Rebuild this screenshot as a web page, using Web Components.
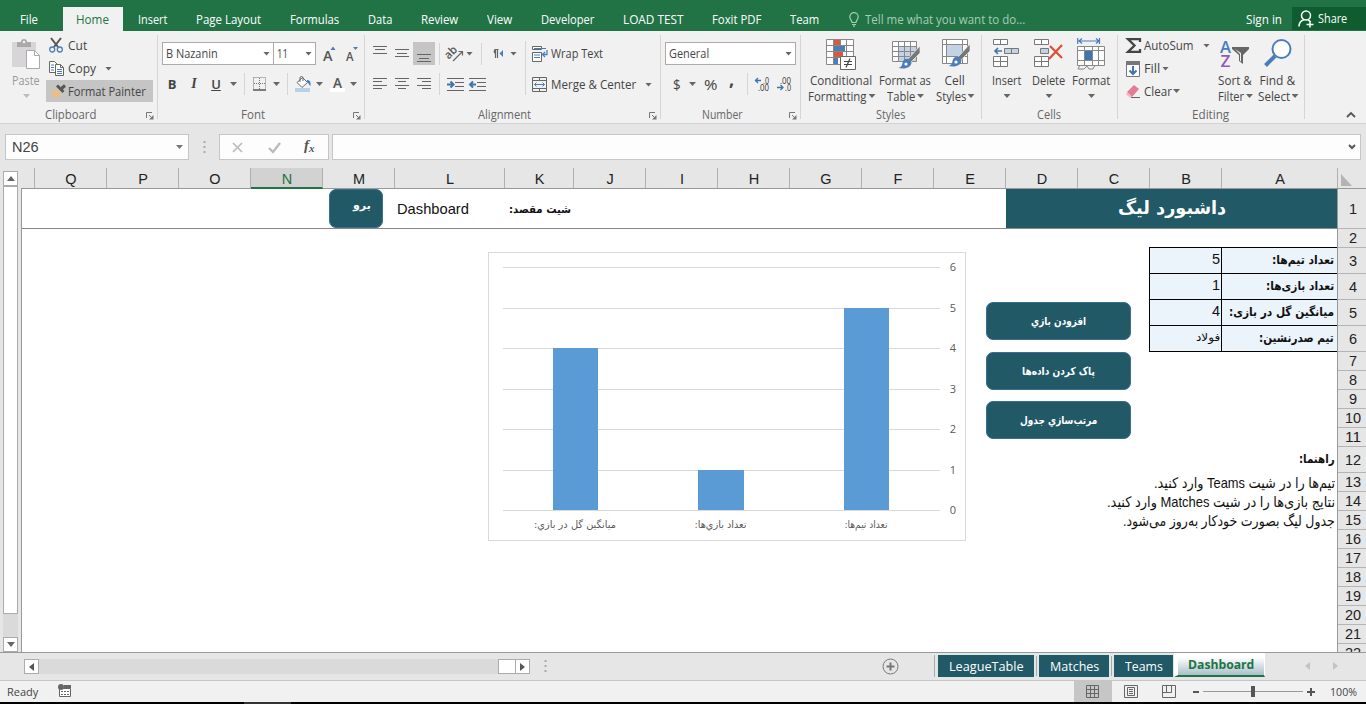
<!DOCTYPE html>
<html lang="en">
<head>
<meta charset="utf-8">
<title>Dashboard - Excel</title>
<style>
html, body {
  margin: 0;
  height: 704px;
  overflow: hidden;
  background: #e6e6e6;
}
</style>
</head>
<body>
<excel-window></excel-window>

<script>
const UI_FONT = '"Open Sans", "Noto Sans", sans-serif';
const CELL_FONT = '"Liberation Sans", "DejaVu Sans", sans-serif';

function define(name, html, setup) {
  const template = document.createElement('template');
  template.innerHTML = html;
  customElements.define(name, class extends HTMLElement {
    constructor() {
      super();
      this.attachShadow({ mode: 'open' });
      this.shadowRoot.appendChild(template.content.cloneNode(true));
    }
    connectedCallback() {
      if (setup) setup(this, this.shadowRoot);
    }
  });
}

/* ---------- icons: [width, height, markup] ---------- */
const lines = (list) => list.map(([x1, x2, y]) => `<path d="M${x1} ${y + .5}H${x2}" stroke="#666"/>`).join('');
const ICONS = {
  bulb: [10, 15, `<g fill="none" stroke="#a6cdb5" stroke-width="1.2"><path d="M3 10.5C3 8.500.8 7.500.8 4.800A4.200 4.200 0 0 1 9.200 4.800C9.200 7.500 7 8.500 7 10.500ZM3 12.500H7M4 14.200H6"/></g>`],
  person: [16, 18, `<g fill="none" stroke="#fff" stroke-width="1.500"><circle cx="8" cy="5.500" r="4.500"/><path d="M1 16.500C1.200 12.500 3 10.500 6 9.800M10 10C11 10.400 12 11 12.500 12M12 11v6.500M8.500 14.500h7"/></g>`],
  paste: [28, 31, `<path d="M0 3h24v25H0z" fill="#d8d5d8"/><path d="M5 3h4a3 3 0 0 1 6 0h4v5H5z" fill="#aaa"/><circle cx="12" cy="3" r="1.300" fill="#f1f1f1"/><path d="M14.500 11.500h8l5 5v13h-13z" fill="#fff" stroke="#aaa"/><path d="M22.500 11.500v5h5" fill="none" stroke="#aaa"/>`],
  cut: [14, 15, `<path d="M2 0l7 9M12 0L5 9" stroke="#555" stroke-width="2"/><circle cx="3.200" cy="11.500" r="2.500" fill="none" stroke="#4a7ebb" stroke-width="1.300"/><circle cx="10.800" cy="11.500" r="2.500" fill="none" stroke="#4a7ebb" stroke-width="1.300"/>`],
  copy: [15, 15, `<g fill="#fff" stroke="#666"><path d="M.5.500h5l3 3v8h-8z"/><path d="M6.500 3.500h5l3 3v8h-8z"/><path d="M11.500 3.500v3h3" fill="none"/></g><path d="M2 4h3M2 6.500h3M2 9h3M8 8.500h5M8 10.500h5M8 12.500h5" stroke="#4a7ebb"/>`],
  painter: [14, 14, `<path d="M0 6l4-1 5 5-2 3-4 1-3-4z" fill="#e8bf84"/><path d="M4 2.500L10.500 9 12.500 7 6 .5z" fill="#555"/><path d="M9.500 4.500L13 1.500" stroke="#555" stroke-width="3"/>`],
  launcher: [8, 8, `<path d="M.500 6V.500H6M3 3l3 3" fill="none" stroke="#777"/><path d="M7.500 3v4.500H3z" fill="#777"/>`],
  growfont: [14, 15, `<text x="0" y="14.500" font-size="15" font-weight="600" textLength="9.500" lengthAdjust="spacingAndGlyphs" fill="#555">A</text><path d="M7.500 4l2.500-3.500L12.500 4z" fill="#4a7ebb"/>`],
  shrinkfont: [14, 15, `<text x="0" y="14.500" font-size="12" font-weight="600" textLength="7.500" lengthAdjust="spacingAndGlyphs" fill="#555">A</text><path d="M7 1l2.500 3L12 1z" fill="#4a7ebb"/>`],
  borders: [14, 14, `<path d="M.500.500h12v12M.500.500v12M6.500 1v12M1 6.500h12" fill="none" stroke="#777" stroke-dasharray="1 1"/><path d="M0 13h13" stroke="#555" stroke-width="1.500"/>`],
  fillcolor: [17, 16, `<path d="M0 12h15v4H0z" fill="#b9d0ea"/><path d="M7.500 1.500l5 5-5.500 5-5-5z" fill="#fff" stroke="#666"/><path d="M5 6V2a1.500 1.500 0 0 1 3 0v3" fill="none" stroke="#666"/><path d="M12 4c3 0 4 2 3.500 6-1.500-.5-1.500-3-3.500-4z" fill="#4a7ebb"/>`],
  fontcolor: [15, 16, `<path d="M0 12h15v4H0z" fill="#fff"/><text x="3" y="11.500" font-size="14" font-weight="600" textLength="9" lengthAdjust="spacingAndGlyphs" fill="#555">A</text>`],
  top: [14, 24, lines([[0, 14, 4], [2, 12, 7], [0, 14, 11]])],
  middle: [14, 24, lines([[0, 14, 7], [2, 12, 11], [0, 14, 14]])],
  bottom: [14, 24, lines([[0, 14, 12], [2, 12, 16], [0, 14, 19]])],
  left: [14, 12, lines([[0, 14, 0], [0, 9, 3], [0, 14, 7], [0, 9, 10]])],
  center: [14, 12, lines([[0, 14, 0], [3, 11, 3], [0, 14, 7], [3, 11, 10]])],
  right: [14, 12, lines([[0, 14, 0], [5, 14, 3], [0, 14, 7], [5, 14, 10]])],
  orient: [17, 16, `<g transform="rotate(-45 6 8)"><text x="-1" y="9" font-size="11.500" font-weight="600" textLength="13" lengthAdjust="spacingAndGlyphs" fill="#555">ab</text></g><path d="M6 15L15 6M11.500 5.500H15.500V9.500" fill="none" stroke="#666" stroke-width="1.200"/>`],
  rtl: [13, 10, `<path d="M3.500.500H7.500M4.500 0V9M6.500 0V9" stroke="#666" stroke-width="1.200"/><path d="M4.500 0a2.600 2.600 0 0 0 0 5z" fill="#666"/><path d="M12 1v7L8.500 4.500z" fill="#4a7ebb"/>`],
  indent: [17, 13, lines([[0, 17, 0], [8, 17, 4], [8, 17, 8], [0, 17, 12]]) + `<path d="M0 6.500h6M3.500 3.500l3 3-3 3" fill="none" stroke="#3f74ae" stroke-width="2"/>`],
  outdent: [17, 13, lines([[0, 17, 0], [8, 17, 4], [8, 17, 8], [0, 17, 12]]) + `<path d="M1 6.500h6M4 3.500l-3 3 3 3" fill="none" stroke="#3f74ae" stroke-width="2"/>`],
  wrap: [16, 16, `<g fill="#fff" stroke="#666"><path d="M.500.500h9v3h-9zM.500 6.500h9v9h-9z"/></g><path d="M2 2.500h12M2 9h6M2 11.500h6" stroke="#4a7ebb"/><path d="M15 4v4.500H11M13 6l-2.500 2.500L13 11" fill="none" stroke="#4a7ebb" stroke-width="1.300"/>`],
  merge: [15, 15, `<path d="M.500.500h14v14H.500zM.500 3.500h14M.500 11.500h14M7.500.500v3M7.500 11.500v3" fill="none" stroke="#666"/><path d="M2.500 7.500h10M4.500 5.500l-2 2 2 2M10.500 5.500l2 2-2 2" fill="none" stroke="#4a7ebb"/>`],
  incdec: [15, 14, `<path d="M0 3.500h6M3 1L.500 3.500 3 6" fill="none" stroke="#3f74ae" stroke-width="1.300"/><text x="8" y="7" font-size="8.500" fill="#333" textLength="6" lengthAdjust="spacingAndGlyphs">.0</text><text x="3" y="14" font-size="8.500" fill="#333" textLength="11" lengthAdjust="spacingAndGlyphs">.00</text>`],
  decdec: [15, 14, `<path d="M0 10.500h6M3.500 8L6 10.500 3.500 13" fill="none" stroke="#3f74ae" stroke-width="1.300"/><text x="3" y="7" font-size="8.500" fill="#333" textLength="11" lengthAdjust="spacingAndGlyphs">.00</text><text x="8" y="14" font-size="8.500" fill="#333" textLength="6" lengthAdjust="spacingAndGlyphs">.0</text>`],
  conditional: [31, 31, `<path d="M.500.500h27v25H.500z" fill="#fff"/><path d="M8 1h6v6H8zM8 13h9v6H8z" fill="#d65a3c"/><path d="M8 7h11v6H8zM8 19h4v6H8z" fill="#4a7ebb"/><path d="M.500.500h27v25H.500zM.500 6.500h27M.500 12.500h27M.500 18.500h27M7.500.500v25M14.500.500v6M20.500.500v25" fill="none" stroke="#888"/><path d="M14.500 17.500h15v13h-15z" fill="#fff" stroke="#666"/><path d="M18 22.500h8M18 25.500h8M24 19.500l-4 9" stroke="#444" fill="none" stroke-width="1.200"/>`],
  formattable: [29, 31, `<path d="M.500 2.500h24v20H.500z" fill="#fff"/><path d="M6 8h19v15H6z" fill="#c3d3e6"/><path d="M.500 2.500h24v20H.500zM.500 7.500h24M.500 12.500h24M.500 17.500h24M6.500 2.500v20M12.500 2.500v20M18.500 2.500v20" fill="none" stroke="#888"/><path d="M28 7L16 20l3 3L28 14z" fill="#777" stroke="#f1f1f1" stroke-width=".7"/><path d="M17 20c-4-1-6 1-6.500 4-.5 3-1.500 4-4 5 7 1.500 13-.5 13-6z" fill="#4a7ebb"/><circle cx="14" cy="25" r="1.600" fill="#fff"/>`],
  cellstyles: [29, 31, `<path d="M.500.500h25v24H.500z" fill="#fff"/><path d="M5 6h15v11H5z" fill="#c3d3e6"/><path d="M.500.500h25v24H.500zM.500 5.500h25M.500 17.500h25M4.500.500v24M20.500.500v24" fill="none" stroke="#888"/><path d="M28 5L16 18l3 3L28 12z" fill="#777" stroke="#f1f1f1" stroke-width=".7"/><path d="M17 18c-4-1-6 1-6.500 4-.5 3-1.500 4-4 5 7 1.500 13-.5 13-6z" fill="#4a7ebb"/><circle cx="14" cy="23" r="1.600" fill="#fff"/>`],
  insert: [27, 30, `<g fill="#fff" stroke="#777"><path d="M.500.500h14v5H.500zM7.500.500v5M.500 17.500h14v10H.500zM7.500 17.500v10M.500 22.500h14"/><path d="M11.500 9.500h14v5h-14zM18.500 9.500v5" fill="#c3d3e6"/></g><path d="M2 12h7M5 9l-3 3 3 3" stroke="#3f74ae" stroke-width="1.600" fill="none"/>`],
  delete: [30, 30, `<g fill="#fff" stroke="#777"><path d="M.500.500h14v5H.500zM7.500.500v5M.500 17.500h14v10H.500zM7.500 17.500v10M.500 22.500h14"/><path d="M6.500 9.500h8v5h-8z" fill="#c3d3e6"/></g><path d="M16 7l12 12M28 6L15 20" stroke="#dc5036" stroke-width="2.200"/>`],
  format: [29, 31, `<g transform="translate(0 -1)"><path d="M.700 0v6M22.500 0v6M2 3h20M5 .5L2 3l3 2.500M19 .5L22 3l-3 2.500" stroke="#4a7ebb" fill="none" stroke-width="1.200"/><path d="M.500 8.500h27v19H.500z" fill="#fff"/><path d="M8 13h8v10H8z" fill="#3f74ae"/><path d="M.500 8.500h27v19H.500zM.500 12.500h27M.500 22.500h27M7.500 8.500v19M15.500 8.500v19M21.500 8.500v19M3 27l-2 4h6l3-3 2 3h4l2-4" fill="none" stroke="#888"/></g>`],
  sigma: [15, 15, `<path d="M14 4V1.200H2L8.500 7.500 2 13.800H14V11" fill="none" stroke="#444" stroke-width="2.300"/>`],
  fill: [14, 16, `<path d="M.500.500h13v15H.500z" fill="#fff" stroke="#777"/><path d="M0 0h14v4H0z" fill="#777"/><path d="M7 5v8M3.500 9.500L7 13l3.500-3.500" fill="none" stroke="#3f74ae" stroke-width="2"/>`],
  clear: [14, 14, `<path d="M1 8L8 1l5 4-7 8z" fill="#e77a94"/><path d="M1 8l5 5-2 .500-4-3z" fill="#f3b6c3"/><path d="M5 13.500h9" stroke="#666"/>`],
  sort: [30, 30, `<g font-weight="600"><text x="0" y="13.500" font-size="16.500" fill="#4a7ebb" textLength="11" lengthAdjust="spacingAndGlyphs">A</text><text x="0.500" y="27.500" font-size="16.500" fill="#9459b8" textLength="10" lengthAdjust="spacingAndGlyphs">Z</text></g><path d="M12 8h17v2l-6 6v9l-4-3v-6l-7-6z" fill="#666"/><path d="M15 10l5 5v7l1 .500V14z" fill="#f1f1f1"/>`],
  find: [28, 30, `<circle cx="17.500" cy="10" r="9" fill="#fff" stroke="#4a7ebb" stroke-width="2"/><path d="M11 17L1.500 26.500" stroke="#4a7ebb" stroke-width="4"/>`],
  collapse: [10, 7, `<path d="M1 6l4-4 4 4" fill="none" stroke="#555" stroke-width="1.800"/>`],
  expand: [8, 6, `<path d="M1 1l3 3 3-3" fill="none" stroke="#555" stroke-width="2"/>`],
  cancel: [11, 11, `<path d="M1 1l9 9M10 1l-9 9" stroke="#bbb" stroke-width="1.700"/>`],
  accept: [13, 11, `<path d="M1 6l4 4 7-9" fill="none" stroke="#bbb" stroke-width="2.400"/>`],
  dots: [3, 12, `<path d="M.500 0h2v2h-2zM.500 5h2v2h-2zM.500 10h2v2h-2z" fill="#aaa"/>`],
  corner: [11, 12, `<path d="M0 0v12h11z" fill="#b4b4b4"/>`],
  up: [8, 5, `<path d="M0 5l4-5 4 5z" fill="#666"/>`],
  down: [8, 5, `<path d="M0 0l4 5 4-5z" fill="#666"/>`],
  prev: [5, 8, `<path d="M5 0L0 4l5 4z" fill="currentColor"/>`],
  next: [5, 8, `<path d="M0 0l5 4-5 4z" fill="currentColor"/>`],
  newsheet: [17, 17, `<circle cx="8.500" cy="8.500" r="7.500" fill="none" stroke="#777"/><path d="M4.500 8.500h8M8.500 4.500v8" stroke="#777" stroke-width="2"/>`],
  macro: [14, 14, `<path d="M1.500 4.500h11v8h-11z" fill="#fff" stroke="#666"/><path d="M6 1h7v3H6z" fill="#666"/><circle cx="3" cy="3" r="3" fill="#666"/><path d="M3 7.500h8M3 10.500h8" stroke="#666" stroke-dasharray="2 1"/>`],
  normal: [14, 13, `<path d="M.500.500h12v12H.500zM.500 4.500h12M.500 8.500h12M4.500.500v12M8.500.500v12" fill="none" stroke="#666"/>`],
  page: [14, 13, `<path d="M.500.500h13v12H.500z" fill="none" stroke="#666"/><path d="M3.500 2.500h7v8h-7zM5 4.500h4M5 6.500h4M5 8.500h4" fill="none" stroke="#666"/>`],
  pagebreak: [14, 13, `<path d="M.500.500h13v12H.500zM4.500.500v7M9.500.500v7M.500 7.500h9" fill="none" stroke="#666"/>`],
};

define('ui-icon', `
<style>
:host { display: block; flex: none; }
svg { display: block; overflow: visible; font-family: ${UI_FONT}; }
</style>
<div id="box"></div>
`, (el, root) => {
  const [w, h, body] = ICONS[el.getAttribute('name')];
  root.querySelector('#box').innerHTML = `<svg width="${w}" height="${h}" viewBox="0 0 ${w} ${h}">${body}</svg>`;
});

/* one line of text, condensed or stretched to the width in its "w" attribute */
define('ui-label', `
<style>
:host { display: block; flex: none; white-space: nowrap; }
span { display: inline-block; transform-origin: 0 50%; }
</style>
<span><slot></slot></span>
`, (el, root) => {
  const w = Number(el.getAttribute('w'));
  if (!w) return;
  const span = root.querySelector('span');
  el.style.direction = 'ltr';
  span.style.direction = el.hasAttribute('rtl') ? 'rtl' : 'ltr';
  el.style.width = w + 'px';
  span.style.transform = `scaleX(${w / span.offsetWidth})`;
});

define('drop-arrow', `
<style>
:host { display: block; flex: none; width: 7px; height: 4px; margin-right: -2px; background: var(--arrow, #666); clip-path: polygon(0 0, 100% 0, 50% 100%); }
</style>
`);

define('tool-sep', `
<style>
:host { display: block; flex: none; width: 1px; height: 22px; background: #d5d5d5; }
</style>
`);

/* ---------- title tabs ---------- */
define('ribbon-tabs', `
<style>
:host { display: flex; height: 31px; background: #217346; color: #fff; font: 12px ${UI_FONT}; }
div { display: flex; align-items: center; box-sizing: border-box; height: 24px; margin-top: 7px; }
.home { width: 60px; padding-left: 13px; margin-left: 25px; background: #f1f1f1; color: #217346; }
.tell { color: #a6cdb5; gap: 6px; margin-left: 30px; }
.share { height: 23px; width: 74px; margin-left: 10px; padding-left: 6px; gap: 4px; background: #0f5c30; }
</style>
<div style="margin-left:20px"><ui-label w="18">File</ui-label></div>
<div class="home"><ui-label w="33">Home</ui-label></div>
<div style="margin-left:15px"><ui-label w="29">Insert</ui-label></div>
<div style="margin-left:29px"><ui-label w="65">Page Layout</ui-label></div>
<div style="margin-left:29px"><ui-label w="49">Formulas</ui-label></div>
<div style="margin-left:29px"><ui-label w="24">Data</ui-label></div>
<div style="margin-left:29px"><ui-label w="37">Review</ui-label></div>
<div style="margin-left:29px"><ui-label w="25">View</ui-label></div>
<div style="margin-left:29px"><ui-label w="53">Developer</ui-label></div>
<div style="margin-left:29px"><ui-label w="60">LOAD TEST</ui-label></div>
<div style="margin-left:29px"><ui-label w="49">Foxit PDF</ui-label></div>
<div style="margin-left:29px"><ui-label w="29">Team</ui-label></div>
<div class="tell"><ui-icon name="bulb"></ui-icon><ui-label w="160">Tell me what you want to do...</ui-label></div>
<div style="margin-left:auto"><ui-label w="36">Sign in</ui-label></div>
<div class="share"><ui-icon name="person"></ui-icon><ui-label w="29">Share</ui-label></div>
`);

/* ---------- ribbon ---------- */
define('ribbon-group', `
<style>
:host { display: flex; flex: none; flex-direction: column; box-sizing: border-box; height: 92px; position: relative; }
.body { height: 75px; display: flex; }
.foot { height: 18px; display: flex; align-items: center; justify-content: center; padding-right: 2px; color: #666; }
:host([launcher]) .foot { padding-right: 17px; }
.line { position: absolute; right: 0; top: 4px; width: 1px; height: 84px; background: #d5d5d5; }
#launch { position: absolute; right: 4px; top: 81px; }
</style>
<div class="body"><slot></slot></div>
<div class="foot" id="foot"></div>
<div class="line"></div>
<div id="launch"></div>
`, (el, root) => {
  root.querySelector('#foot').innerHTML = `<ui-label w="${el.getAttribute('label-width')}">${el.getAttribute('name')}</ui-label>`;
  el.style.width = el.getAttribute('width') + 'px';
  if (el.hasAttribute('launcher')) root.querySelector('#launch').innerHTML = '<ui-icon name="launcher"></ui-icon>';
});

/* large button: icon on top, one or two caption lines */
define('big-button', `
<style>
:host { display: flex; flex: none; flex-direction: column; align-items: center; padding-top: 8px; }
.pic { height: 33px; }
.line { display: flex; align-items: center; gap: 2px; height: 16px; }
.line.last { padding-right: 1px; }
</style>
<div class="pic"><slot name="icon"></slot></div>
<div class="line"><slot></slot></div>
<div class="line last"><slot name="second"></slot><drop-arrow></drop-arrow></div>
`);

define('combo-box', `
<style>
:host { display: flex; flex: none; align-items: center; justify-content: space-between; box-sizing: border-box; height: 23px; padding: 0 5px 0 3px; background: #fff; border: 1px solid #ababab; }
</style>
<slot></slot><drop-arrow></drop-arrow>
`);

define('excel-ribbon', `
<style>
:host { display: flex; height: 92px; background: #f1f1f1; border-bottom: 1px solid #d2d2d2; color: #444; font: 12px ${UI_FONT}; }
.col { display: flex; flex-direction: column; }
.row { display: flex; align-items: center; flex: none; }
.painter { width: 107px; height: 22px; background: #c5c5c5; }
.on { background: #c5c5c5; height: 23px; display: flex; align-items: center; padding: 0 4px; }
.glyph { width: 10px; text-align: center; font-size: 14px; line-height: 16px; font-weight: 600; color: #444; }
.disabled { color: #999; --arrow: #bbb; }
</style>

<ribbon-group name="Clipboard" width="158" label-width="51" launcher>
  <big-button class="disabled" style="margin-left:11px; width:30px">
    <ui-icon slot="icon" name="paste"></ui-icon><ui-label w="28">Paste</ui-label>
  </big-button>
  <div class="col" style="margin-left:5px; padding-top:3px">
    <div class="row" style="height:23px; padding-left:3px"><ui-icon name="cut"></ui-icon><ui-label w="19" style="margin-left:5px">Cut</ui-label></div>
    <div class="row" style="height:23px; padding-left:3px"><ui-icon name="copy"></ui-icon><ui-label w="28" style="margin-left:4px">Copy</ui-label><drop-arrow style="margin-left:9px"></drop-arrow></div>
    <div class="row painter"><ui-icon name="painter" style="margin-left:6px"></ui-icon><ui-label w="78" style="margin-left:2px">Format Painter</ui-label></div>
  </div>
</ribbon-group>

<ribbon-group name="Font" width="207" label-width="24" launcher>
  <div class="col" style="padding-left:4px">
    <div class="row" style="height:23px; margin-top:11px">
      <combo-box style="width:112px"><ui-label w="52">B Nazanin</ui-label></combo-box>
      <combo-box style="width:43px; margin-left:-1px"><ui-label w="11">11</ui-label></combo-box>
      <ui-icon name="growfont" style="margin-left:7px"></ui-icon>
      <ui-icon name="shrinkfont" style="margin-left:9px"></ui-icon>
    </div>
    <div class="row" style="height:22px; margin-top:8px">
      <div class="glyph" style="margin-left:5px; font-size:13px; font-weight:bold">B</div>
      <div class="glyph" style="margin-left:12px; font:italic bold 14px 'Liberation Serif', serif">I</div>
      <div class="glyph" style="margin-left:12px; font-size:13px; text-decoration:underline">U</div>
      <drop-arrow style="margin-left:9px"></drop-arrow>
      <tool-sep style="margin-left:9px"></tool-sep>
      <ui-icon name="borders" style="margin-left:8px"></ui-icon>
      <drop-arrow style="margin-left:6px"></drop-arrow>
      <tool-sep style="margin-left:9px"></tool-sep>
      <ui-icon name="fillcolor" style="margin-left:7px"></ui-icon>
      <drop-arrow style="margin-left:4px"></drop-arrow>
      <ui-icon name="fontcolor" style="margin-left:9px"></ui-icon>
      <drop-arrow style="margin-left:5px"></drop-arrow>
    </div>
  </div>
</ribbon-group>

<ribbon-group name="Alignment" width="296" label-width="53" launcher>
  <div class="col">
    <div class="row" style="height:23px; margin-top:11px; padding-left:8px">
      <ui-icon name="top"></ui-icon>
      <ui-icon name="middle" style="margin-left:8px"></ui-icon>
      <div class="on" style="margin-left:4px"><ui-icon name="bottom"></ui-icon></div>
      <tool-sep style="margin-left:4px"></tool-sep>
      <ui-icon name="orient" style="margin-left:7px"></ui-icon>
      <drop-arrow style="margin-left:2px"></drop-arrow>
      <tool-sep style="margin-left:10px"></tool-sep>
      <ui-icon name="rtl" style="margin-left:9px"></ui-icon>
      <drop-arrow style="margin-left:6px"></drop-arrow>
    </div>
    <div class="row" style="height:22px; margin-top:8px; padding-left:8px">
      <ui-icon name="left"></ui-icon>
      <ui-icon name="center" style="margin-left:8px"></ui-icon>
      <ui-icon name="right" style="margin-left:8px"></ui-icon>
      <tool-sep style="margin-left:8px"></tool-sep>
      <ui-icon name="indent" style="margin-left:7px"></ui-icon>
      <ui-icon name="outdent" style="margin-left:5px"></ui-icon>
    </div>
  </div>
  <tool-sep style="margin:10px 0 0 10px; height:54px"></tool-sep>
  <div class="col" style="margin-left:6px">
    <div class="row" style="height:23px; margin-top:11px"><ui-icon name="wrap"></ui-icon><ui-label w="52" style="margin-left:3px">Wrap Text</ui-label></div>
    <div class="row" style="height:23px; margin-top:8px"><ui-icon name="merge"></ui-icon><ui-label w="85" style="margin-left:4px">Merge &amp; Center</ui-label><drop-arrow style="margin-left:9px"></drop-arrow></div>
  </div>
</ribbon-group>

<ribbon-group name="Number" width="140" label-width="41" launcher>
  <div class="col" style="padding-left:4px">
    <div class="row" style="height:23px; margin-top:11px"><combo-box style="width:131px"><ui-label w="40">General</ui-label></combo-box></div>
    <div class="row" style="height:22px; margin-top:8px">
      <ui-label w="8" style="margin-left:8px; font-size:15px">$</ui-label>
      <drop-arrow style="margin-left:8px"></drop-arrow>
      <ui-label w="13" style="margin-left:10px; font-size:15px">%</ui-label>
      <ui-label w="5" style="margin:-11px 0 0 12px; font-size:18px; font-weight:bold">,</ui-label>
      <tool-sep style="margin-left:13px"></tool-sep>
      <ui-icon name="incdec" style="margin-left:7px"></ui-icon>
      <ui-icon name="decdec" style="margin-left:7px"></ui-icon>
    </div>
  </div>
</ribbon-group>

<ribbon-group name="Styles" width="181" label-width="29">
  <big-button style="margin-left:6px; width:68px"><ui-icon slot="icon" name="conditional"></ui-icon><ui-label w="62">Conditional</ui-label><ui-label slot="second" w="59">Formatting</ui-label></big-button>
  <big-button style="margin-left:4px; width:52px"><ui-icon slot="icon" name="formattable" style="margin-left:2px"></ui-icon><ui-label w="52">Format as</ui-label><ui-label slot="second" w="28">Table</ui-label></big-button>
  <big-button style="margin-left:4px; width:39px"><ui-icon slot="icon" name="cellstyles" style="margin-left:3px"></ui-icon><ui-label w="20">Cell</ui-label><ui-label slot="second" w="30">Styles</ui-label></big-button>
</ribbon-group>

<ribbon-group name="Cells" width="136" label-width="24">
  <big-button style="margin-left:9px; width:31px"><ui-icon slot="icon" name="insert"></ui-icon><ui-label w="29">Insert</ui-label></big-button>
  <big-button style="margin-left:9px; width:35px"><ui-icon slot="icon" name="delete"></ui-icon><ui-label w="33">Delete</ui-label></big-button>
  <big-button style="margin-left:6px; width:38px"><ui-icon slot="icon" name="format"></ui-icon><ui-label w="38">Format</ui-label></big-button>
</ribbon-group>

<ribbon-group name="Editing" width="187" label-width="37">
  <div class="col" style="margin-left:8px; padding-top:3px">
    <div class="row" style="height:23px"><ui-icon name="sigma"></ui-icon><ui-label w="50" style="margin-left:3px">AutoSum</ui-label><drop-arrow style="margin-left:9px"></drop-arrow></div>
    <div class="row" style="height:23px"><ui-icon name="fill"></ui-icon><ui-label w="16" style="margin-left:4px">Fill</ui-label><drop-arrow style="margin-left:2px"></drop-arrow></div>
    <div class="row" style="height:22px"><ui-icon name="clear"></ui-icon><ui-label w="28" style="margin-left:4px">Clear</ui-label><drop-arrow style="margin-left:1px"></drop-arrow></div>
  </div>
  <big-button style="margin-left:10px; width:34px"><ui-icon slot="icon" name="sort"></ui-icon><ui-label w="34">Sort &amp;</ui-label><ui-label slot="second" w="26">Filter</ui-label></big-button>
  <big-button style="margin-left:6px; width:39px"><ui-icon slot="icon" name="find"></ui-icon><ui-label w="36">Find &amp;</ui-label><ui-label slot="second" w="32">Select</ui-label></big-button>
</ribbon-group>

<ui-icon name="collapse" style="margin:80px 10px 0 auto"></ui-icon>
`);

/* ---------- formula bar ---------- */
define('formula-bar', `
<style>
:host { display: flex; align-items: center; height: 26px; padding: 10px 5px 0; color: #444; --arrow: #777; }
div { box-sizing: border-box; height: 26px; display: flex; align-items: center; background: #fdfdfd; border: 1px solid #c6c6c6; }
.name { width: 184px; padding: 0 7px 0 6px; justify-content: space-between; font: 14px ${CELL_FONT}; }
.buttons { width: 110px; margin-left: 13px; padding-left: 12px; }
.fx { font: italic bold 15px "Liberation Serif", serif; margin: -3px 0 0 23px; color: #555; }
.fx sub { font-size: 11px; vertical-align: -2px; }
.input { flex: 1; margin-left: 3px; justify-content: flex-end; padding-right: 4px; }
</style>
<div class="name"><ui-label w="27">N26</ui-label><drop-arrow></drop-arrow></div>
<ui-icon name="dots" style="margin-left:14px"></ui-icon>
<div class="buttons"><ui-icon name="cancel"></ui-icon><ui-icon name="accept" style="margin-left:25px"></ui-icon><span class="fx">f<sub>x</sub></span></div>
<div class="input"><ui-icon name="expand"></ui-icon></div>
`);

/* ---------- sheet ---------- */
const COLUMNS = [['A', 116], ['B', 72], ['C', 72], ['D', 72], ['E', 72], ['F', 72], ['G', 72], ['H', 72], ['I', 72], ['J', 72],
  ['K', 69], ['L', 110], ['M', 72], ['N', 72], ['O', 72], ['P', 72], ['Q', 72], ['', 13]];
const ROWS = [40, 19, 26, 26, 26, 26, 19, 19, 19, 19, 19, 26, 19, 19, 19, 19, 19, 19, 19, 19, 19, 19];

define('column-headers', `
<style>
:host { display: flex; direction: rtl; height: 20px; padding-left: 22px; border-bottom: 1px solid #999; font: 14.500px ${CELL_FONT}; color: #222; }
#list { display: flex; }
#list div { box-sizing: border-box; height: 20px; line-height: 22px; text-align: center; padding-left: 1px; border-right: 1px solid #b0b0b0; }
#list .active { background: #d2d2d2; color: #217346; height: 21px; border-bottom: 2px solid #217346; }
.all { width: 28px; padding-top: 6px; direction: ltr; box-sizing: border-box; }
</style>
<div class="all"><ui-icon name="corner" style="margin-left:3px"></ui-icon></div>
<div id="list"></div>
`, (el, root) => {
  root.querySelector('#list').innerHTML = COLUMNS.map(([name, w]) =>
    `<div style="width:${w}px"${name === 'N' ? ' class="active"' : ''}>${name}</div>`).join('');
});

define('row-headers', `
<style>
:host { display: block; width: 29px; height: 463px; overflow: hidden; box-sizing: border-box; border-left: 1px solid #999; font: 14.500px ${CELL_FONT}; color: #222; }
#list div { box-sizing: border-box; display: flex; align-items: center; justify-content: center; border-bottom: 1px solid #b5b5b5; padding-left: 2px; }
</style>
<div id="list"></div>
`, (el, root) => {
  root.querySelector('#list').innerHTML = ROWS.map((h, i) => `<div style="height:${h}px"><ui-label w="${i < 9 ? 8 : 16}">${i + 1}</ui-label></div>`).join('');
});

define('scroll-bar', `
<style>
:host { display: flex; background: #dadada; }
:host([vertical]) { flex-direction: column; }
div { box-sizing: border-box; flex: none; width: 15px; height: 15px; display: flex; align-items: center; justify-content: center; background: #fff; border: 1px solid #ababab; color: #555; }
</style>
<div id="start"></div>
<div id="thumb"></div>
<div id="end"></div>
`, (el, root) => {
  const vertical = el.hasAttribute('vertical');
  const start = root.querySelector('#start');
  const thumb = root.querySelector('#thumb');
  const end = root.querySelector('#end');
  start.innerHTML = `<ui-icon name="${vertical ? 'up' : 'prev'}"></ui-icon>`;
  end.innerHTML = `<ui-icon name="${vertical ? 'down' : 'next'}"></ui-icon>`;
  if (vertical) {
    thumb.style.height = el.getAttribute('thumb') + 'px';
    end.style.marginTop = 'auto';
  } else {
    thumb.style.width = el.getAttribute('thumb') + 'px';
    thumb.style.marginLeft = 'auto';
    end.style.marginLeft = '-1px';
  }
});

define('macro-button', `
<style>
:host { position: absolute; box-sizing: border-box; display: flex; justify-content: center; align-items: center; width: 145px; height: 38px; background: #215967; border: 1px solid #3a6f92; border-radius: 7px; color: #fff; font: bold 11px "DejaVu Sans", sans-serif; }
</style>
<slot></slot>
`);

define('bar-chart', `
<style>
:host { position: absolute; display: block; box-sizing: border-box; width: 478px; height: 289px; background: #fff; border: 1px solid #d9d9d9; }
svg { display: block; }
text { fill: #595959; text-anchor: middle; }
.num { font: 11px "Open Sans", sans-serif; }
.cat { font: 10px "DejaVu Sans", sans-serif; direction: rtl; }
</style>
<svg id="plot" width="476" height="287"></svg>
`, (el, root) => {
  const base = 257;
  const step = 40.5;
  let svg = '';
  for (let v = 0; v <= 6; v++) {
    const y = Math.round(base - v * step);
    svg += `<path d="M14 ${y + .5}H451" stroke="#d9d9d9"/><text class="num" x="464" y="${y + 4}">${v}</text>`;
  }
  [['تعداد تیم‌ها:', 5, 355, 45, 43], ['تعداد بازي‌ها:', 1, 209, 46, 52], ['میانگین گل در بازي:', 4, 64, 45, 82]].forEach(([name, v, x, w, len]) => {
    const top = Math.round(base - v * step);
    svg += `<rect x="${x}" y="${top}" width="${w}" height="${base - top}" fill="#5b9bd5"/>`;
    svg += `<text class="cat" x="${x + w / 2 - .5}" y="275" textLength="${len}" lengthAdjust="spacingAndGlyphs">${name}</text>`;
  });
  root.querySelector('#plot').innerHTML = svg;
});

define('sheet-cells', `
<style>
:host { display: block; position: relative; width: 1315px; height: 463px; overflow: hidden; background: #fff; font: 14.500px ${CELL_FONT}; color: #111; }
.grid { direction: rtl; display: grid; grid-template-columns: ${COLUMNS.map(c => c[1] + 'px').join(' ')}; grid-template-rows: ${ROWS.map(r => r + 'px').join(' ')}; margin-right: -1px; }
.grid > * { box-sizing: border-box; display: flex; align-items: center; }
.freeze { grid-area: 1 / 1 / 2 / 19; border-bottom: 1px solid #888; }
.title { grid-area: 1 / 1 / 2 / 5; justify-content: center; background: #215967; color: #fff; font: bold 18px "DejaVu Sans", sans-serif; margin-bottom: 1px; padding-bottom: 3px; }
.key, .val { background: #ebf3fb; border: 1px solid #000; margin: -1px 0 0 -1px; }
.key { grid-column: 1; border-right: none; padding: 0 4px 2px 0; font: bold 12px "DejaVu Sans", sans-serif; }
.val { grid-column: 2; padding: 0 1px 3px 0; }
.text { grid-column: 1 / 7; padding: 0 3px 0 0; }
.bold { font: bold 12px "DejaVu Sans", sans-serif; }
</style>
<div class="grid">
  <div class="freeze"></div>
  <div class="title"><ui-label w="108" rtl>داشبورد لیگ</ui-label></div>
  <div class="bold" style="grid-area:1 / 11; padding:1px 3px 0 0; font-size:11px"><ui-label w="62" rtl>شیت مقصد:</ui-label></div>
  <div style="grid-area:1 / 12; justify-content:flex-end; padding-left:2px"><ui-label w="72">Dashboard</ui-label></div>
  <div class="key" style="grid-row:3"><ui-label w="62" rtl>تعداد تیم‌ها:</ui-label></div>
  <div class="val" style="grid-row:3"><ui-label w="8">5</ui-label></div>
  <div class="key" style="grid-row:4"><ui-label w="68" rtl>تعداد بازی‌ها:</ui-label></div>
  <div class="val" style="grid-row:4"><ui-label w="8">1</ui-label></div>
  <div class="key" style="grid-row:5"><ui-label w="105" rtl>میانگین گل در بازی:</ui-label></div>
  <div class="val" style="grid-row:5"><ui-label w="8">4</ui-label></div>
  <div class="key" style="grid-row:6"><ui-label w="75" rtl>تیم صدرنشین:</ui-label></div>
  <div class="val" style="grid-row:6; font-size:11px"><ui-label w="24" rtl>فولاد</ui-label></div>
  <div class="text bold" style="grid-row:12; padding-bottom:2px"><ui-label w="36" rtl>راهنما:</ui-label></div>
  <div class="text" style="grid-row:13"><ui-label w="181" rtl>تیم‌ها را در شیت Teams وارد کنید.</ui-label></div>
  <div class="text" style="grid-row:14"><ui-label w="228" rtl>نتایج بازی‌ها را در شیت Matches وارد کنید.</ui-label></div>
  <div class="text" style="grid-row:15"><ui-label w="212" rtl>جدول لیگ بصورت خودکار به‌روز می‌شود.</ui-label></div>
</div>
<macro-button style="left:307px; top:0; width:54px; height:39px; padding:0 0 6px 12px"><ui-label w="18" rtl>برو</ui-label></macro-button>
<macro-button style="left:964px; top:113px"><ui-label w="55" rtl>افزودن بازي</ui-label></macro-button>
<macro-button style="left:964px; top:163px"><ui-label w="73" rtl>پاک کردن داده‌ها</ui-label></macro-button>
<macro-button style="left:964px; top:212px"><ui-label w="77" rtl>مرتب‌سازي جدول</ui-label></macro-button>
<bar-chart style="left:466px; top:63px"></bar-chart>
`);

/* ---------- bottom bars ---------- */
define('sheet-tab', `
<style>
:host { display: flex; flex: none; align-items: center; justify-content: center; box-sizing: border-box; height: 22px; margin: 2px 0 0 5px; background: #215967; color: #fff; outline: 1px solid #d9ece6; box-shadow: -3px 0 0 -1px #e6e6e6, -4px 0 0 -1px #aaa; }
:host([active]) { height: 24px; margin: 0 0 0 1px; border: solid #fff; border-width: 0 1px 0 4px; border-bottom: 2px solid #217346; box-shadow: none; outline: none; background: linear-gradient(#fff 20%, #a9bfca); color: #217346; font-weight: bold; text-decoration: underline; text-underline-offset: 2px; }
</style>
<slot></slot>
`);

define('sheet-tabs', `
<style>
:host { display: flex; height: 27px; border-top: 1px solid #999; color: #444; font: 12px ${UI_FONT}; }
scroll-bar { width: 506px; height: 15px; margin: 6px 0 0 24px; }
.nav { display: flex; gap: 23px; margin: 9px 28px 0 auto; color: #c3c3c3; }
</style>
<scroll-bar thumb="18"></scroll-bar>
<ui-icon name="dots" style="margin:7px 0 0 14px"></ui-icon>
<ui-icon name="newsheet" style="margin:5px 0 0 335px"></ui-icon>
<tool-sep style="margin:2px 0 0 35px; background:#aaa"></tool-sep>
<sheet-tab style="width:96px; margin-left:3px; box-shadow:none"><ui-label w="75">LeagueTable</ui-label></sheet-tab>
<sheet-tab style="width:70px"><ui-label w="49">Matches</ui-label></sheet-tab>
<sheet-tab style="width:59px"><ui-label w="38">Teams</ui-label></sheet-tab>
<sheet-tab active style="width:91px"><ui-label w="66">Dashboard</ui-label></sheet-tab>
<div class="nav"><ui-icon name="prev"></ui-icon><ui-icon name="next"></ui-icon></div>
`);

define('status-bar', `
<style>
:host { display: flex; align-items: center; height: 21px; background: #f1f1f1; border-top: 1px solid #c6c6c6; color: #444; font: 11px ${UI_FONT}; }
.view { display: flex; align-items: center; justify-content: center; width: 38px; height: 21px; }
.on { background: #c6c6c6; }
.minus { width: 6px; height: 2px; background: #555; margin-left: 5px; }
.track { display: flex; align-items: center; width: 100px; height: 11px; margin-left: 4px; background: linear-gradient(#999, #999) 0 50% / 100% 1px no-repeat; }
.knob { width: 4px; height: 11px; margin-left: 48px; background: #555; }
.plus { width: 8px; height: 8px; margin: 0 15px 0 4px; background: linear-gradient(#555, #555) 50% / 8px 2px no-repeat, linear-gradient(#555, #555) 50% / 2px 8px no-repeat; }
</style>
<ui-label w="31" style="margin-left:7px">Ready</ui-label>
<ui-icon name="macro" style="margin:-2px 0 0 20px"></ui-icon>
<div class="view on" style="margin-left:auto"><ui-icon name="normal"></ui-icon></div>
<div class="view"><ui-icon name="page"></ui-icon></div>
<div class="view"><ui-icon name="pagebreak"></ui-icon></div>
<div class="minus"></div>
<div class="track"><div class="knob"></div></div>
<div class="plus"></div>
<ui-label w="27" style="margin-right:9px">100%</ui-label>
`);

define('excel-window', `
<style>
:host { display: flex; flex-direction: column; width: 1366px; height: 704px; background: #e6e6e6; }
.work { display: flex; height: 484px; margin-top: 8px; }
.side { width: 21px; height: 484px; box-sizing: border-box; padding: 3px 0 0 3px; flex: none; }
.side scroll-bar { width: 15px; height: 481px; }
.main { display: flex; flex-direction: column; margin-left: -21px; width: 1366px; }
column-headers { margin-left: 21px; padding-left: 1px; }
.sheet { display: flex; padding-left: 21px; }
sheet-cells { border-left: 1px solid #999; }
.edge { height: 2px; background: linear-gradient(90deg, #000 244px, #333 244px 291px, #000 291px); }
</style>
<ribbon-tabs></ribbon-tabs>
<excel-ribbon></excel-ribbon>
<formula-bar></formula-bar>
<div class="work">
  <div class="side"><scroll-bar vertical thumb="428"></scroll-bar></div>
  <div class="main">
    <column-headers></column-headers>
    <div class="sheet"><sheet-cells></sheet-cells><row-headers></row-headers></div>
  </div>
</div>
<sheet-tabs></sheet-tabs>
<status-bar></status-bar>
<div class="edge"></div>
`);
</script>
</body>
</html>
